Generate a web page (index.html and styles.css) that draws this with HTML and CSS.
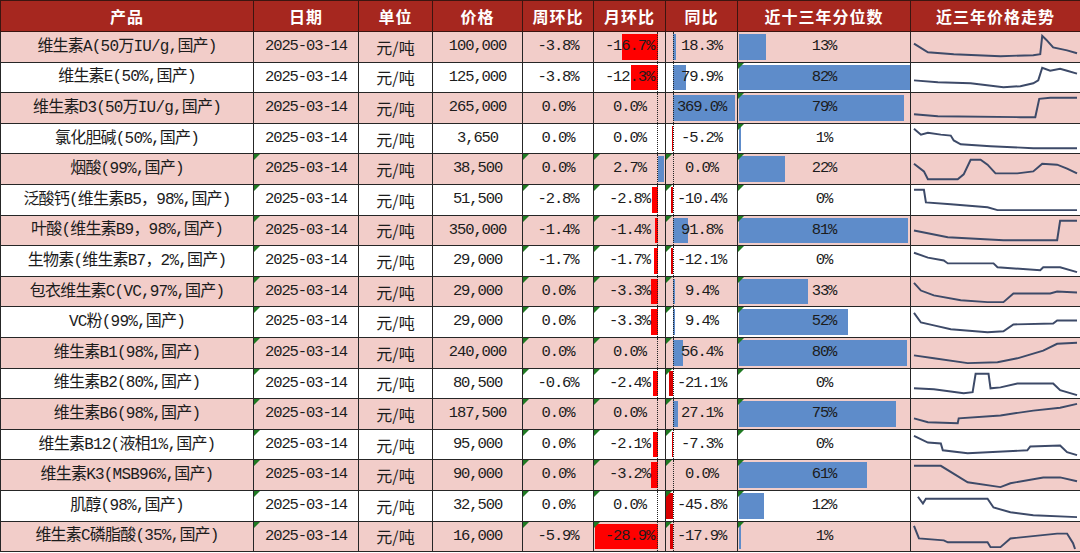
FILE: index.html
```html
<!DOCTYPE html>
<html lang="zh-CN">
<head>
<meta charset="utf-8">
<title>维生素价格</title>
<link rel="stylesheet" href="styles.css">
</head>
<body>
<table class="sheet">
  <colgroup>
    <col class="c-name"><col class="c-date"><col class="c-unit"><col class="c-price"><col class="c-wow"><col class="c-mom"><col class="c-yoy"><col class="c-pct"><col class="c-trend">
  </colgroup>
  <thead>
    <tr class="head">
      <th>产品</th><th>日期</th><th>单位</th><th>价格</th><th>周环比</th><th>月环比</th><th>同比</th><th>近十三年分位数</th><th>近三年价格走势</th>
    </tr>
  </thead>
  <tbody>
    <tr class="pink">
      <td class="name">维生素A(50万IU/g,国产)</td><td>2025-03-14</td><td class="cn">元/吨</td><td>100,000</td><td>-3.8%</td>
      <td class="mom"><i class="bar neg" style="width:36px"></i><span class="v">-16.7%</span></td>
      <td class="yoy"><i class="bar pos" style="width:3px"></i><span class="v">18.3%</span></td>
      <td class="pct"><i class="bar" style="width:27px"></i><span class="v">13%</span></td>
      <td class="trend"><svg viewBox="0 0 170 30" preserveAspectRatio="none"><polyline points="3,12 17,21 43,23 90,25 123,24 130,23 132,4 136,8 143,16 157,19 167,22"/></svg></td>
    </tr>
    <tr>
      <td class="name">维生素E(50%,国产)</td><td>2025-03-14</td><td class="cn">元/吨</td><td>125,000</td><td>-3.8%</td>
      <td class="mom"><i class="bar neg" style="width:27px"></i><span class="v">-12.3%</span></td>
      <td class="yoy"><i class="bar pos" style="width:13px"></i><span class="v">79.9%</span></td>
      <td class="pct g"><i class="bar" style="width:171px"></i><span class="v">82%</span></td>
      <td class="trend"><svg viewBox="0 0 170 30" preserveAspectRatio="none"><polyline points="3,18 27,20 60,21 93,25 110,24 123,21 128,18 132,5 140,8 150,6 157,8 167,11"/></svg></td>
    </tr>
    <tr class="pink">
      <td class="name">维生素D3(50万IU/g,国产)</td><td>2025-03-14</td><td class="cn">元/吨</td><td>265,000</td><td>0.0%</td>
      <td class="mom"><span class="v">0.0%</span></td>
      <td class="yoy"><i class="bar pos" style="width:62px"></i><span class="v">369.0%</span></td>
      <td class="pct g"><i class="bar" style="width:165px"></i><span class="v">79%</span></td>
      <td class="trend"><svg viewBox="0 0 170 30" preserveAspectRatio="none"><polyline points="3,22 27,24 110,25 125,25 129,6 140,5 167,5"/></svg></td>
    </tr>
    <tr>
      <td class="name">氯化胆碱(50%,国产)</td><td>2025-03-14</td><td class="cn">元/吨</td><td>3,650</td><td>0.0%</td>
      <td class="mom"><span class="v">0.0%</span></td>
      <td class="yoy"><i class="bar neg" style="width:1px"></i><span class="v">-5.2%</span></td>
      <td class="pct g"><i class="bar" style="width:2px"></i><span class="v">1%</span></td>
      <td class="trend"><svg viewBox="0 0 170 30" preserveAspectRatio="none"><polyline points="3,5 10,11 17,9 30,11 40,12 43,17 50,21 80,23 123,25 167,25"/></svg></td>
    </tr>
    <tr class="pink">
      <td class="name">烟酸(99%,国产)</td><td class="g">2025-03-14</td><td class="cn">元/吨</td><td>38,500</td><td class="g">0.0%</td>
      <td class="mom g"><i class="bar pos" style="width:6px"></i><span class="v">2.7%</span></td>
      <td class="yoy g"><span class="v">0.0%</span></td>
      <td class="pct g"><i class="bar" style="width:46px"></i><span class="v">22%</span></td>
      <td class="trend"><svg viewBox="0 0 170 30" preserveAspectRatio="none"><polyline points="3,9 13,17 17,25 47,25 53,20 60,5 70,5 77,10 85,19 107,19 123,17 132,9 147,10 157,14 167,19"/></svg></td>
    </tr>
    <tr>
      <td class="name">泛酸钙(维生素B5，98%,国产)</td><td class="g">2025-03-14</td><td class="cn">元/吨</td><td>51,500</td><td class="g">-2.8%</td>
      <td class="mom g"><i class="bar neg" style="width:6px"></i><span class="v">-2.8%</span></td>
      <td class="yoy g"><i class="bar neg" style="width:2px"></i><span class="v">-10.4%</span></td>
      <td class="pct g"><span class="v">0%</span></td>
      <td class="trend"><svg viewBox="0 0 170 30" preserveAspectRatio="none"><polyline points="3,5 13,5 15,18 40,20 77,23 87,26 123,26 167,26"/></svg></td>
    </tr>
    <tr class="pink">
      <td class="name">叶酸(维生素B9，98%,国产)</td><td class="g">2025-03-14</td><td class="cn">元/吨</td><td>350,000</td><td class="g">-1.4%</td>
      <td class="mom g"><i class="bar neg" style="width:3px"></i><span class="v">-1.4%</span></td>
      <td class="yoy g"><i class="bar pos" style="width:15px"></i><span class="v">91.8%</span></td>
      <td class="pct g"><i class="bar" style="width:169px"></i><span class="v">81%</span></td>
      <td class="trend"><svg viewBox="0 0 170 30" preserveAspectRatio="none"><polyline points="3,15 37,22 93,25 147,25 150,5 167,5"/></svg></td>
    </tr>
    <tr>
      <td class="name">生物素(维生素B7，2%,国产)</td><td class="g">2025-03-14</td><td class="cn">元/吨</td><td>29,000</td><td class="g">-1.7%</td>
      <td class="mom g"><i class="bar neg" style="width:4px"></i><span class="v">-1.7%</span></td>
      <td class="yoy g"><i class="bar neg" style="width:2px"></i><span class="v">-12.1%</span></td>
      <td class="pct g"><span class="v">0%</span></td>
      <td class="trend"><svg viewBox="0 0 170 30" preserveAspectRatio="none"><polyline points="3,7 17,12 33,15 37,18 83,18 87,22 130,25 133,22 150,22 167,27"/></svg></td>
    </tr>
    <tr class="pink">
      <td class="name">包衣维生素C(VC,97%,国产)</td><td class="g">2025-03-14</td><td class="cn">元/吨</td><td>29,000</td><td class="g">0.0%</td>
      <td class="mom g"><i class="bar neg" style="width:7px"></i><span class="v">-3.3%</span></td>
      <td class="yoy g"><i class="bar pos" style="width:2px"></i><span class="v">9.4%</span></td>
      <td class="pct g"><i class="bar" style="width:69px"></i><span class="v">33%</span></td>
      <td class="trend"><svg viewBox="0 0 170 30" preserveAspectRatio="none"><polyline points="3,6 10,14 23,19 50,24 77,26 93,26 103,17 140,17 147,15 167,16"/></svg></td>
    </tr>
    <tr>
      <td class="name">VC粉(99%,国产)</td><td class="g">2025-03-14</td><td class="cn">元/吨</td><td>29,000</td><td class="g">0.0%</td>
      <td class="mom g"><i class="bar neg" style="width:7px"></i><span class="v">-3.3%</span></td>
      <td class="yoy g"><i class="bar pos" style="width:2px"></i><span class="v">9.4%</span></td>
      <td class="pct g"><i class="bar" style="width:109px"></i><span class="v">52%</span></td>
      <td class="trend"><svg viewBox="0 0 170 30" preserveAspectRatio="none"><polyline points="3,5 10,15 23,18 40,22 77,25 93,24 103,17 143,16 147,13 167,13"/></svg></td>
    </tr>
    <tr class="pink">
      <td class="name">维生素B1(98%,国产)</td><td class="g">2025-03-14</td><td class="cn">元/吨</td><td>240,000</td><td class="g">0.0%</td>
      <td class="mom g"><span class="v">0.0%</span></td>
      <td class="yoy g"><i class="bar pos" style="width:10px"></i><span class="v">56.4%</span></td>
      <td class="pct g"><i class="bar" style="width:168px"></i><span class="v">80%</span></td>
      <td class="trend"><svg viewBox="0 0 170 30" preserveAspectRatio="none"><polyline points="3,18 23,21 57,26 87,25 107,21 133,13 147,6 167,5"/></svg></td>
    </tr>
    <tr>
      <td class="name">维生素B2(80%,国产)</td><td class="g">2025-03-14</td><td class="cn">元/吨</td><td>80,500</td><td class="g">-0.6%</td>
      <td class="mom g"><i class="bar neg" style="width:5px"></i><span class="v">-2.4%</span></td>
      <td class="yoy g"><i class="bar neg" style="width:4px"></i><span class="v">-21.1%</span></td>
      <td class="pct g"><span class="v">0%</span></td>
      <td class="trend"><svg viewBox="0 0 170 30" preserveAspectRatio="none"><polyline points="3,20 23,21 53,25 62,24 65,5 78,5 80,20 90,19 107,15 143,15 150,22 167,27"/></svg></td>
    </tr>
    <tr class="pink">
      <td class="name">维生素B6(98%,国产)</td><td class="g">2025-03-14</td><td class="cn">元/吨</td><td>187,500</td><td class="g">0.0%</td>
      <td class="mom g"><span class="v">0.0%</span></td>
      <td class="yoy g"><i class="bar pos" style="width:5px"></i><span class="v">27.1%</span></td>
      <td class="pct g"><i class="bar" style="width:157px"></i><span class="v">75%</span></td>
      <td class="trend"><svg viewBox="0 0 170 30" preserveAspectRatio="none"><polyline points="3,20 17,24 47,25 48,20 90,17 123,12 150,9 167,5"/></svg></td>
    </tr>
    <tr>
      <td class="name">维生素B12(液相1%,国产)</td><td class="g">2025-03-14</td><td class="cn">元/吨</td><td>95,000</td><td class="g">0.0%</td>
      <td class="mom g"><i class="bar neg" style="width:5px"></i><span class="v">-2.1%</span></td>
      <td class="yoy g"><i class="bar neg" style="width:1px"></i><span class="v">-7.3%</span></td>
      <td class="pct g"><span class="v">0%</span></td>
      <td class="trend"><svg viewBox="0 0 170 30" preserveAspectRatio="none"><polyline points="3,6 17,13 30,14 32,21 57,24 117,21 120,17 150,16 157,23 167,26"/></svg></td>
    </tr>
    <tr class="pink">
      <td class="name">维生素K3(MSB96%,国产)</td><td class="g">2025-03-14</td><td class="cn">元/吨</td><td>90,000</td><td class="g">0.0%</td>
      <td class="mom g"><i class="bar neg" style="width:7px"></i><span class="v">-3.2%</span></td>
      <td class="yoy g"><span class="v">0.0%</span></td>
      <td class="pct g"><i class="bar" style="width:128px"></i><span class="v">61%</span></td>
      <td class="trend"><svg viewBox="0 0 170 30" preserveAspectRatio="none"><polyline points="3,5 30,5 57,22 90,27 100,23 133,17 150,17 167,21"/></svg></td>
    </tr>
    <tr>
      <td class="name">肌醇(98%,国产)</td><td class="g">2025-03-14</td><td class="cn">元/吨</td><td>32,500</td><td class="g">0.0%</td>
      <td class="mom g"><span class="v">0.0%</span></td>
      <td class="yoy g"><i class="bar neg" style="width:7px"></i><span class="v">-45.8%</span></td>
      <td class="pct g"><i class="bar" style="width:25px"></i><span class="v">12%</span></td>
      <td class="trend"><svg viewBox="0 0 170 30" preserveAspectRatio="none"><polyline points="7,6 12,13 15,8 77,8 83,17 100,22 123,25 167,27"/></svg></td>
    </tr>
    <tr class="pink">
      <td class="name">维生素C磷脂酸(35%,国产)</td><td class="g">2025-03-14</td><td class="cn">元/吨</td><td>16,000</td><td class="g">-5.9%</td>
      <td class="mom g"><i class="bar neg" style="width:63px"></i><span class="v">-28.9%</span></td>
      <td class="yoy g"><i class="bar neg" style="width:3px"></i><span class="v">-17.9%</span></td>
      <td class="pct g"><i class="bar" style="width:2px"></i><span class="v">1%</span></td>
      <td class="trend"><svg viewBox="0 0 170 30" preserveAspectRatio="none"><polyline points="3,4 8,17 33,19 37,21 77,21 80,26 90,26 100,17 147,12 157,12 163,22 165,28"/></svg></td>
    </tr>
  </tbody>
</table>
</body>
</html>
```
FILE: styles.css
```css
html, body {
  margin: 0;
  padding: 0;
  background: #ffffff;
}

.sheet {
  border-collapse: collapse;
  table-layout: fixed;
  width: 1080px;
  font-family: "Liberation Mono", "Noto Sans CJK SC", monospace;
  font-size: 15.5px;
  letter-spacing: -1.1px;
  line-height: 1;
  color: #1c1c1c;
}

.c-name { width: 253px; }
.c-date { width: 105px; }
.c-unit { width: 74px; }
.c-price { width: 90px; }
.c-wow { width: 71px; }
.c-mom { width: 72px; }
.c-yoy { width: 72px; }
.c-pct { width: 173px; }
.c-trend { width: 170px; }

.head {
  height: 31px;
}

.head th {
  background: #a6271f;
  color: #ffffff;
  font-family: "Noto Sans CJK SC", sans-serif;
  font-size: 16px;
  font-weight: 700;
  letter-spacing: 1px;
  padding: 0;
  border: 1px solid #3b1510;
  text-align: center;
}

tbody tr {
  height: 30.6px;
}

tbody tr.pink {
  background: #f2cdc9;
}

td {
  position: relative;
  padding: 0;
  border: 1px solid #262626;
  text-align: center;
  white-space: nowrap;
  overflow: hidden;
}

td.name {
  font-size: 16px;
  letter-spacing: -0.8px;
}

td.cn {
  font-family: "Noto Sans CJK SC", sans-serif;
  font-size: 16px;
  letter-spacing: 0;
}

.v {
  position: relative;
  z-index: 1;
}

/* green error-indicator triangles */
td.g::before {
  content: "";
  position: absolute;
  top: 0;
  left: 0;
  z-index: 3;
  border-top: 6px solid #1f7a22;
  border-right: 6px solid transparent;
}

/* data bars */
.bar {
  position: absolute;
  top: 2px;
  bottom: 2px;
  background: #5e8cca;
}

.bar.neg {
  background: #ff0000;
}

.mom .bar.neg { right: 7px; }
.mom .bar.pos { left: 64px; }
.yoy .bar.pos { left: 7px; }
.yoy .bar.neg { right: 64px; background: #d80000; }
.pct .bar { left: 1px; }

.mom::after,
.yoy::after {
  content: "";
  position: absolute;
  top: 0;
  bottom: 0;
  border-left: 1px dotted #222222;
  z-index: 2;
}

.mom::after { right: 7px; }
.yoy::after { left: 7px; }

/* sparklines */
td.trend svg {
  display: block;
  width: 169px;
  height: 29px;
  margin: 0 auto;
}

td.trend polyline {
  fill: none;
  stroke: #3d4a68;
  stroke-width: 2;
  stroke-linejoin: miter;
}
```
